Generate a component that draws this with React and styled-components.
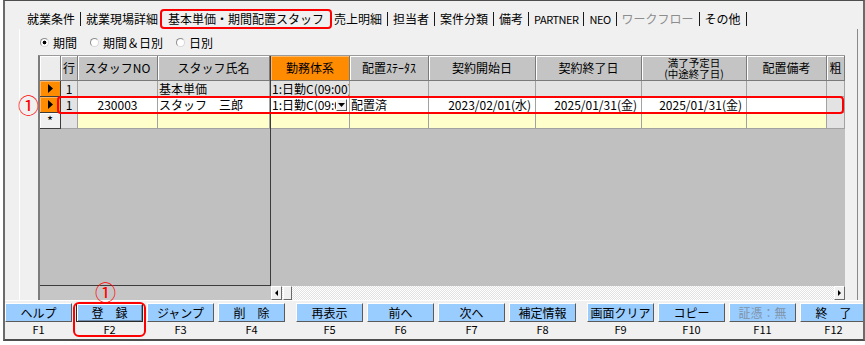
import React from 'react';
import styled, { createGlobalStyle, css } from 'styled-components';

const FONT = `"Noto Sans CJK JP", "Noto Sans", sans-serif`;

const GlobalStyle = createGlobalStyle`
  html, body { margin: 0; padding: 0; background: #ffffff; }
  body { font-family: ${FONT}; font-size: 12px; color: #000000; }
  *, *::before, *::after { box-sizing: border-box; }
`;

const Root = styled.div`
  width: 865px;
  height: 345px;
  padding-left: 3px;
  background: #ffffff;
  overflow: hidden;
`;

const Window = styled.div`
  width: 862px;
  height: 341px;
  display: flex;
  flex-direction: column;
  background: #f0f0f0;
  border-top: 1px solid #4d4d4d;
  border-left: 2px solid #6b6b6b;
  border-right: 2px solid #6b6b6b;
  border-bottom: 2px solid #4d4d4d;
  overflow: hidden;
`;

/* ---------- tabs ---------- */
const TabStrip = styled.nav`
  display: flex;
  align-items: center;
  height: 20px;
  margin-top: 8px;
  padding-left: 17px;
  flex-shrink: 0;
`;

const Tab = styled.div`
  display: flex;
  align-items: center;
  height: 20px;
  padding: 0 5px;
  white-space: nowrap;
  font-size: 12px;
  line-height: 14px;
  color: ${(p) => (p.$disabled ? '#8d8d8d' : '#000000')};
  ${(p) =>
    p.$latin &&
    css`
      font-size: 11px;
      letter-spacing: -0.5px;
    `}
  ${(p) =>
    p.$active &&
    css`
      margin: 0 -3px;
      padding: 0 6px;
      border: 2px solid #ff0000;
      border-radius: 4px;
    `}
`;

const TabSep = styled.span`
  flex: none;
  width: 1px;
  height: 14px;
  background: #1a1a1a;
`;

/* ---------- panel ---------- */
const Panel = styled.section`
  height: 271px;
  flex-shrink: 0;
  margin: 0 5px 0 14px;
  padding: 0 12px 0 18px;
  border-left: 1px solid #ffffff;
  border-right: 1px solid #8a8a8a;
  display: flex;
  flex-direction: column;
`;

const RadioRow = styled.div`
  display: flex;
  align-items: center;
  gap: 13px;
  height: 13px;
  margin-top: 7px;
  padding-left: 2px;
`;

const RadioLabel = styled.label`
  display: flex;
  align-items: center;
  gap: 4px;
  font-size: 12px;
  line-height: 13px;
  white-space: nowrap;
`;

const RadioMark = styled.span`
  flex: none;
  width: 9px;
  height: 9px;
  border-radius: 50%;
  border: 1px solid #8c8c8c;
  border-right-color: #d8d8d8;
  border-bottom-color: #d8d8d8;
  background: ${(p) =>
    p.$checked ? 'radial-gradient(circle, #000 0 1.6px, #ffffff 2.2px)' : '#ffffff'};
`;

/* ---------- grid ---------- */
const Grid = styled.div`
  position: relative;
  margin-top: 6px;
  height: 245px;
  display: grid;
  grid-template-columns: 231px 574px;
  grid-template-rows: 1fr 14px;
  border-left: 2px solid #7c7c7c;
  border-top: 1px solid #9a9a9a;
  background: #c0c0c0;
`;

const Pane = styled.div`
  display: grid;
  grid-template-columns: ${(p) => p.$cols};
  grid-auto-rows: min-content;
  align-content: start;
  overflow: hidden;
  background: #c0c0c0;
  ${(p) =>
    p.$frozen &&
    css`
      border-right: 1px solid #3c3c3c;
      border-bottom: 1px solid #3c3c3c;
    `}
`;

const HeadCell = styled.div`
  height: 25px;
  display: flex;
  flex-direction: column;
  align-items: center;
  justify-content: center;
  text-align: center;
  white-space: nowrap;
  overflow: hidden;
  background: ${(p) => (p.$accent ? '#ff8c00' : p.$corner ? '#ececec' : '#c4c4c4')};
  border-right: 1px solid #7a7a7a;
  border-bottom: 1px solid #7a7a7a;
  box-shadow: inset 1px 1px 0 ${(p) => (p.$accent ? '#ffb866' : '#ffffff')};
  font-size: 12px;
  line-height: 14px;
`;

const HeadLine = styled.span`
  display: block;
  font-size: 10.5px;
  line-height: 11.5px;
`;

const tones = { ro: '#e3e3e3', edit: '#ffffff', fresh: '#ffffcc' };
const justify = { left: 'flex-start', center: 'center', right: 'flex-end' };

const Cell = styled.div`
  height: 16px;
  display: flex;
  align-items: center;
  justify-content: ${(p) => justify[p.$align || 'left']};
  padding: ${(p) => (p.$align === 'right' ? '0 4px 0 1px' : '0 1px 0 1px')};
  background: ${(p) => tones[p.$tone || 'ro']};
  border-right: 1px solid #a2a2a2;
  border-bottom: 1px solid #a2a2a2;
  font-size: 12px;
  line-height: 15px;
  white-space: nowrap;
  overflow: hidden;
`;

const CellText = styled.span`
  flex: 1 1 auto;
  min-width: 0;
  overflow: hidden;
`;

const DropButton = styled.span`
  flex: none;
  width: 11px;
  height: 12px;
  margin-right: 1px;
  display: flex;
  align-items: center;
  justify-content: center;
  background: #f0f0f0;
  border: 1px solid;
  border-color: #ffffff #555555 #555555 #ffffff;
`;

const Selector = styled.div`
  height: 16px;
  display: flex;
  align-items: center;
  justify-content: center;
  background: ${(p) => (p.$current ? '#ff8c00' : '#f0f0f0')};
  border-right: 1px solid #3c3c3c;
  border-bottom: 1px solid #3c3c3c;
  box-shadow: inset 1px 1px 0 ${(p) => (p.$current ? '#ffb366' : '#ffffff')};
  font-size: 13px;
  line-height: 14px;
`;

const FrozenFoot = styled.div`
  background: #c6c6c6;
`;

const HScroll = styled.div`
  display: flex;
  background-color: #f4f4f4;
  background-image: repeating-conic-gradient(#ffffff 0 25%, #e2e2e2 0 50%);
  background-size: 2px 2px;
`;

const ScrollPart = styled.div`
  flex: none;
  width: ${(p) => (p.$thumb ? '9px' : '11px')};
  margin-left: ${(p) => (p.$end ? 'auto' : p.$thumb ? '1px' : '0')};
  display: flex;
  align-items: center;
  justify-content: center;
  background: #f0f0f0;
  border: 1px solid;
  border-color: #ffffff #6a6a6a #6a6a6a #ffffff;
`;

/* ---------- annotations ---------- */
const RowMark = styled.div`
  position: absolute;
  left: 17px;
  right: 1px;
  top: 40px;
  height: 18px;
  border: 2px solid #ff0000;
  border-radius: 4px;
  pointer-events: none;
`;

const CircleNo = styled.span`
  position: absolute;
  left: ${(p) => p.$left}px;
  top: ${(p) => p.$top}px;
  font-size: 21px;
  line-height: 21px;
  color: #ff0000;
  pointer-events: none;
`;

/* ---------- function keys ---------- */
const KeyBar = styled.footer`
  display: flex;
  gap: 11px;
  padding-top: 2px;
  border-top: 1px solid #ffffff;
`;

const KeyGroup = styled.div`
  display: flex;
  gap: 4px;
`;

const Key = styled.div`
  position: relative;
  flex: none;
  width: 67px;
  display: flex;
  flex-direction: column;
`;

const KeyButton = styled.button`
  height: 19px;
  padding: 0;
  background: #99ccff;
  border: 1px solid;
  border-color: #ffffff #5a5a5a #5a5a5a #ffffff;
  font-family: ${FONT};
  font-size: 12px;
  line-height: 15px;
  white-space: nowrap;
  color: ${(p) => (p.$disabled ? '#7f93a8' : '#000000')};
  ${(p) =>
    p.$focused &&
    css`
      border-color: #2a2a2a;
      box-shadow: inset 1px 1px 0 #ffffff, inset -1px -1px 0 #6f8fb0;
    `}
`;

const KeyLabel = styled.div`
  height: 14px;
  text-align: center;
  font-size: 11px;
  line-height: 14px;
`;

const KeyMark = styled.div`
  position: absolute;
  top: -1px;
  bottom: -1px;
  left: -3px;
  right: -3px;
  border: 2px solid #ff0000;
  border-radius: 6px;
  pointer-events: none;
`;

/* ---------- icons ---------- */
const RightTri = () => (
  <svg width="5" height="9" viewBox="0 0 5 9">
    <polygon points="0,0 5,4.5 0,9" fill="#000" />
  </svg>
);
const LeftTri = () => (
  <svg width="3" height="6" viewBox="0 0 3 6">
    <polygon points="3,0 0,3 3,6" fill="#000" />
  </svg>
);
const SmallRightTri = () => (
  <svg width="3" height="6" viewBox="0 0 3 6">
    <polygon points="0,0 3,3 0,6" fill="#000" />
  </svg>
);
const DownTri = () => (
  <svg width="7" height="4" viewBox="0 0 7 4">
    <polygon points="0,0 7,0 3.5,4" fill="#000" />
  </svg>
);

/* ---------- data ---------- */
const TABS = [
  { label: '就業条件', sep: true },
  { label: '就業現場詳細' },
  { label: '基本単価・期間配置スタッフ', active: true },
  { label: '売上明細', sep: true },
  { label: '担当者', sep: true },
  { label: '案件分類', sep: true },
  { label: '備考', sep: true },
  { label: 'PARTNER', sep: true, latin: true },
  { label: 'NEO', sep: true, latin: true },
  { label: 'ワークフロー', sep: true, disabled: true },
  { label: 'その他', sep: true },
];

const FROZEN_COLS = '21px 17px 80px 112px';
const SCROLL_COLS = '79px 79px 107px 106px 105px 80px 18px';

const SCROLL_HEAD = [
  { label: '勤務体系', accent: true },
  { label: '配置ｽﾃｰﾀｽ' },
  { label: '契約開始日' },
  { label: '契約終了日' },
  { label: ['満了予定日', '(中途終了日)'] },
  { label: '配置備考' },
  { label: '粗' },
];

const ROWS = [
  {
    selector: 'current',
    frozen: [
      { text: '1', align: 'center' },
      { text: '' },
      { text: '基本単価' },
    ],
    scroll: [
      { text: '1:日勤C(09:00)' },
      { text: '' },
      { text: '' },
      { text: '' },
      { text: '' },
      { text: '' },
      { text: '' },
    ],
  },
  {
    selector: 'current',
    frozen: [
      { text: '1', align: 'center' },
      { text: '230003', align: 'center', tone: 'edit' },
      { text: 'スタッフ　三郎', tone: 'edit' },
    ],
    scroll: [
      { text: '1:日勤C(09:00)', tone: 'edit', drop: true },
      { text: '配置済', tone: 'edit' },
      { text: '2023/02/01(水)', tone: 'edit', align: 'right' },
      { text: '2025/01/31(金)', tone: 'edit', align: 'right' },
      { text: '2025/01/31(金)', tone: 'edit', align: 'right' },
      { text: '', tone: 'edit' },
      { text: '' },
    ],
  },
  {
    selector: 'new',
    frozen: [
      { text: '' },
      { text: '', tone: 'fresh' },
      { text: '', tone: 'fresh' },
    ],
    scroll: [
      { text: '', tone: 'fresh' },
      { text: '', tone: 'fresh' },
      { text: '', tone: 'fresh' },
      { text: '', tone: 'fresh' },
      { text: '', tone: 'fresh' },
      { text: '', tone: 'fresh' },
      { text: '' },
    ],
  },
];

const KEY_GROUPS = [
  [
    { label: 'ヘルプ', fn: 'F1' },
    { label: '登　録', fn: 'F2', focused: true, marked: true },
    { label: 'ジャンプ', fn: 'F3' },
    { label: '削　除', fn: 'F4' },
  ],
  [
    { label: '再表示', fn: 'F5' },
    { label: '前へ', fn: 'F6' },
    { label: '次へ', fn: 'F7' },
    { label: '補定情報', fn: 'F8' },
  ],
  [
    { label: '画面クリア', fn: 'F9' },
    { label: 'コピー', fn: 'F10' },
    { label: '証憑：無', fn: 'F11', disabled: true },
    { label: '終　了', fn: 'F12' },
  ],
];

const DataCell = ({ c }) => (
  <Cell $tone={c.tone} $align={c.align}>
    {c.drop ? (
      <>
        <CellText>{c.text}</CellText>
        <DropButton>
          <DownTri />
        </DropButton>
      </>
    ) : (
      c.text
    )}
  </Cell>
);

export default function App() {
  return (
    <Root>
      <GlobalStyle />
      <Window>
        <TabStrip>
          {TABS.map((t) => (
            <React.Fragment key={t.label}>
              <Tab $active={t.active} $disabled={t.disabled} $latin={t.latin}>
                {t.label}
              </Tab>
              {t.sep && <TabSep />}
            </React.Fragment>
          ))}
        </TabStrip>

        <Panel>
          <RadioRow>
            <RadioLabel>
              <RadioMark $checked />
              期間
            </RadioLabel>
            <RadioLabel>
              <RadioMark />
              期間＆日別
            </RadioLabel>
            <RadioLabel>
              <RadioMark />
              日別
            </RadioLabel>
          </RadioRow>

          <Grid>
            <Pane $frozen $cols={FROZEN_COLS}>
              <HeadCell $corner />
              <HeadCell>行</HeadCell>
              <HeadCell>スタッフNO</HeadCell>
              <HeadCell>スタッフ氏名</HeadCell>
              {ROWS.map((r, i) => (
                <React.Fragment key={i}>
                  <Selector $current={r.selector === 'current'}>
                    {r.selector === 'current' ? <RightTri /> : '*'}
                  </Selector>
                  {r.frozen.map((c, j) => (
                    <DataCell key={j} c={c} />
                  ))}
                </React.Fragment>
              ))}
            </Pane>

            <Pane $cols={SCROLL_COLS}>
              {SCROLL_HEAD.map((h, i) => (
                <HeadCell key={i} $accent={h.accent}>
                  {Array.isArray(h.label)
                    ? h.label.map((line) => <HeadLine key={line}>{line}</HeadLine>)
                    : h.label}
                </HeadCell>
              ))}
              {ROWS.map((r, i) => (
                <React.Fragment key={i}>
                  {r.scroll.map((c, j) => (
                    <DataCell key={j} c={c} />
                  ))}
                </React.Fragment>
              ))}
            </Pane>

            <FrozenFoot />
            <HScroll>
              <ScrollPart>
                <LeftTri />
              </ScrollPart>
              <ScrollPart $thumb />
              <ScrollPart $end>
                <SmallRightTri />
              </ScrollPart>
            </HScroll>

            <RowMark />
            <CircleNo $left={-22} $top={38}>①</CircleNo>
          </Grid>
        </Panel>

        <KeyBar>
          {KEY_GROUPS.map((g, gi) => (
            <KeyGroup key={gi}>
              {g.map((k) => (
                <Key key={k.fn}>
                  <KeyButton type="button" $focused={k.focused} $disabled={k.disabled}>
                    {k.label}
                  </KeyButton>
                  <KeyLabel>{k.fn}</KeyLabel>
                  {k.marked && (
                    <>
                      <KeyMark />
                      <CircleNo $left={19} $top={-22}>①</CircleNo>
                    </>
                  )}
                </Key>
              ))}
            </KeyGroup>
          ))}
        </KeyBar>
      </Window>
    </Root>
  );
}
